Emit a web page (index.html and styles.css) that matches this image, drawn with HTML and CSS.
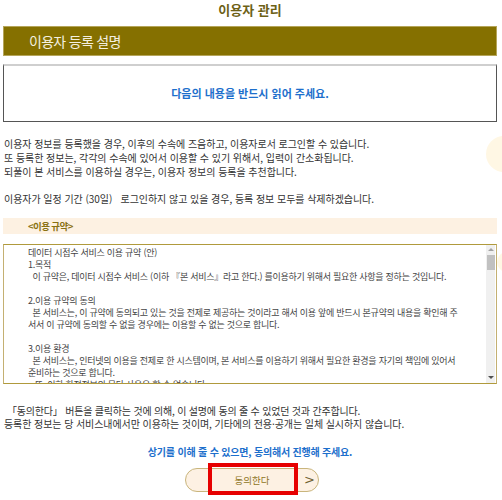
FILE: index.html
```html
<!DOCTYPE html>
<html lang="ko">
<head>
<meta charset="utf-8">
<title>이용자 관리</title>
<link rel="stylesheet" href="styles.css">
</head>
<body>
<div class="deco deco-a"></div>
<div class="deco deco-b"></div>
<div class="page">
  <h1 class="title">이용자 관리</h1>
  <h2 class="bar">이용자 등록 설명</h2>
  <div class="notice">다음의 내용을 반드시 읽어 주세요.</div>
  <p class="para first">이용자 정보를 등록했을 경우, 이후의 수속에 즈음하고, 이용자로서 로그인할 수 있습니다.<br>또 등록한 정보는, 각각의 수속에 있어서 이용할 수 있기 위해서, 입력이 간소화됩니다.<br>되풀이 본 서비스를 이용하실 경우는, 이용자 정보의 등록을 추천합니다.<br>&nbsp;<br>이용자가 일정 기간 (30일)&nbsp;&nbsp; 로그인하지 않고 있을 경우, 등록 정보 모두를 삭제하겠습니다.</p>
  <div class="terms-head">&lt;이용 규약&gt;</div>
  <div class="terms">
    <div class="terms-text">데이터 시접수 서비스 이용 규약 (안)<br>1.목적<br>&nbsp;&nbsp;이 규약은, 데이터 시접수 서비스 (이하 『본 서비스』라고 한다.) 를이용하기 위해서 필요한 사항을 정하는 것입니다.<br>&nbsp;<br>2.이용 규약의 동의<br>&nbsp;&nbsp;본 서비스는, 이 규약에 동의되고 있는 것을 전제로 제공하는 것이라고 해서 이용 앞에 반드시 본규약의 내용을 확인해 주<br>서서 이 규약에 동의할 수 없을 경우에는 이용할 수 없는 것으로 합니다.<br>&nbsp;<br>3.이용 환경<br>&nbsp;&nbsp;본 서비스는, 인터넷의 이용을 전제로 한 시스템이며, 본 서비스를 이용하기 위해서 필요한 환경을 자기의 책임에 있어서<br>준비하는 것으로 합니다.<br>&nbsp;&nbsp;&nbsp;또, 이하 한정정보의 무단 사용은 할 수 없습니다.</div>
    <div class="scrollbar">
      <span class="arrow up"></span>
      <span class="thumb"></span>
      <span class="track"></span>
      <span class="arrow down"></span>
    </div>
  </div>
  <p class="para second"><span class="lead">「동의한다」 버튼을 클릭하는 것에 의해, 이 설명에 동의 줄 수 있었던 것과 간주합니다.</span><br>등록한 정보는 당 서비스내에서만 이용하는 것이며, 기타에의 전용·공개는 일체 실시하지 않습니다.</p>
  <p class="prompt">상기를 이해 줄 수 있으면, 동의해서 진행해 주세요.</p>
  <div class="btn-row">
    <div class="btn">
      <span></span>
      <span class="btn-label">동의한다</span>
      <span class="btn-arrow">&gt;</span>
    </div>
    <div class="highlight"></div>
  </div>
</div>
</body>
</html>
```
FILE: styles.css
```css
* { box-sizing: border-box; }
html, body {
  margin: 0;
  padding: 0;
  background: #ffffff;
}
body {
  width: 502px;
  height: 500px;
  overflow: hidden;
  position: relative;
  font-family: "Noto Sans CJK KR", "Noto Sans", sans-serif;
  color: #333333;
}
.deco {
  position: absolute;
  border-radius: 50%;
  background: #fff7e4;
}
.deco-a { left: 486px; top: 136px; width: 36px; height: 36px; }
.deco-b { left: 497px; top: 252px; width: 20px; height: 20px; }

.page {
  position: relative;
  margin: 0 5px 0 3px;
}
.title {
  margin: 0;
  height: 26px;
  line-height: 20px;
  text-align: center;
  font-size: 13px;
  font-weight: 700;
  letter-spacing: 0;
  color: #6d6116;
}
.bar {
  margin: 0;
  height: 30px;
  line-height: 28px;
  padding-left: 25px;
  background: #857000;
  border: 1px solid #b5a55a;
  color: #f4f0e0;
  font-size: 14px;
  font-weight: 400;
  letter-spacing: -0.7px;
}
.notice {
  margin-top: 8px;
  height: 58px;
  line-height: 55px;
  border: 1px solid #555555;
  border-top: 2px solid #cfcfcf;
  text-align: center;
  color: #1d6fcc;
  font-size: 11px;
  font-weight: 700;
  letter-spacing: 0;
}
.para {
  margin: 0;
  font-size: 10px;
  color: #333333;
  white-space: nowrap;
}
.para.first {
  margin-top: 15px;
  padding-left: 1px;
  line-height: 13.75px;
  letter-spacing: -0.05px;
}
.terms-head {
  margin-top: 12px;
  height: 16px;
  line-height: 16px;
  padding-left: 25px;
  background: #fdf1e2;
  color: #8a7112;
  font-size: 9.5px;
  font-weight: 700;
  letter-spacing: -0.6px;
}
.terms {
  margin-top: 10px;
  height: 140px;
  display: flex;
  border: 1px solid #c4b072;
  border-top-color: #b09a3c;
  border-bottom-color: #b09a3c;
  overflow: hidden;
}
.terms-text {
  flex: 1;
  padding: 2px 0 0 24px;
  font-size: 9px;
  line-height: 12px;
  letter-spacing: -0.27px;
  color: #444444;
  white-space: nowrap;
  overflow: hidden;
}
.scrollbar {
  width: 9px;
  margin-right: 1px;
  display: flex;
  flex-direction: column;
  align-items: center;
  background: #f0f0f0;
}
.arrow {
  width: 9px;
  height: 10px;
  display: flex;
  align-items: center;
  justify-content: center;
}
.arrow::before {
  content: "";
  width: 0;
  height: 0;
  border-left: 3px solid transparent;
  border-right: 3px solid transparent;
}
.arrow.up::before { border-bottom: 3px solid #a3a3a3; }
.arrow.down::before { border-top: 3px solid #505050; }
.thumb {
  width: 8px;
  height: 15px;
  background: #c1c1c1;
}
.track { flex: 1; }

.para.second {
  margin-top: 20px;
  padding-left: 1px;
  line-height: 13.5px;
  letter-spacing: -0.08px;
}
.para.second .lead {
  display: inline-block;
  margin-left: 3px;
  letter-spacing: -0.2px;
}
.prompt {
  margin: 14px 0 0;
  line-height: 14px;
  text-align: center;
  color: #1d6fcc;
  font-size: 10px;
  font-weight: 700;
  letter-spacing: -0.2px;
}
.btn-row {
  position: relative;
  margin-top: 9px;
  display: flex;
  justify-content: center;
}
.btn {
  margin-left: 4px;
  width: 134px;
  height: 24px;
  display: grid;
  grid-template-columns: 14px 1fr 14px;
  align-items: center;
  border: 1px solid #c9b57c;
  border-radius: 12px;
  background: #fdf1e3;
}
.btn-label {
  text-align: center;
  font-size: 9.5px;
  letter-spacing: 0;
  color: #8d7424;
}
.btn-arrow {
  text-align: left;
  font-size: 13px;
  color: #6e6030;
  font-family: "DejaVu Sans", sans-serif;
}
.highlight {
  position: absolute;
  left: 205px;
  top: -5px;
  width: 90px;
  height: 32px;
  border: 4px solid #e60000;
}
```
